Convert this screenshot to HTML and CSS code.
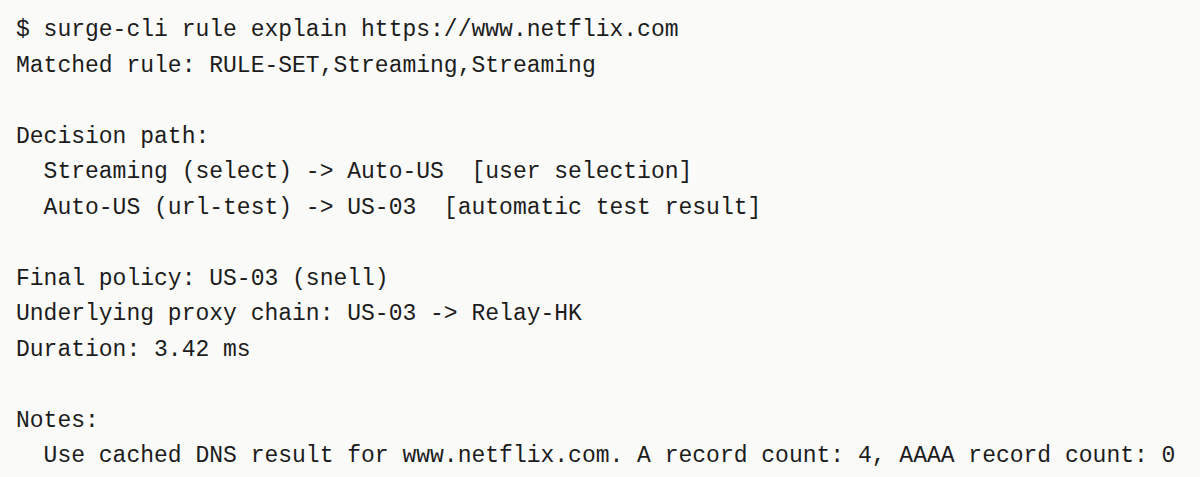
FILE: index.html
```html
<!DOCTYPE html>
<html lang="en">
<head>
<meta charset="utf-8">
<title>surge-cli rule explain</title>
<link rel="stylesheet" href="styles.css">
</head>
<body>
<pre class="terminal">$ surge-cli rule explain https://www.netflix.com
Matched rule: RULE-SET,Streaming,Streaming

Decision path:
  Streaming (select) -&gt; Auto-US  [user selection]
  Auto-US (url-test) -&gt; US-03  [automatic test result]

Final policy: US-03 (snell)
Underlying proxy chain: US-03 -&gt; Relay-HK
Duration: 3.42 ms

Notes:
  Use cached DNS result for www.netflix.com. A record count: 4, AAAA record count: 0</pre>
</body>
</html>
```

FILE: styles.css
```css
html, body {
  margin: 0;
  padding: 0;
  background: #fafaf8;
}
body {
  width: 1200px;
  height: 477px;
  overflow: hidden;
}
.terminal {
  margin: 0;
  padding: 13px 16px 10px;
  font-family: "Liberation Mono", "DejaVu Sans Mono", monospace;
  font-size: 23px;
  line-height: 35.5px;
  color: #1c1c1c;
  white-space: pre;
}
```
